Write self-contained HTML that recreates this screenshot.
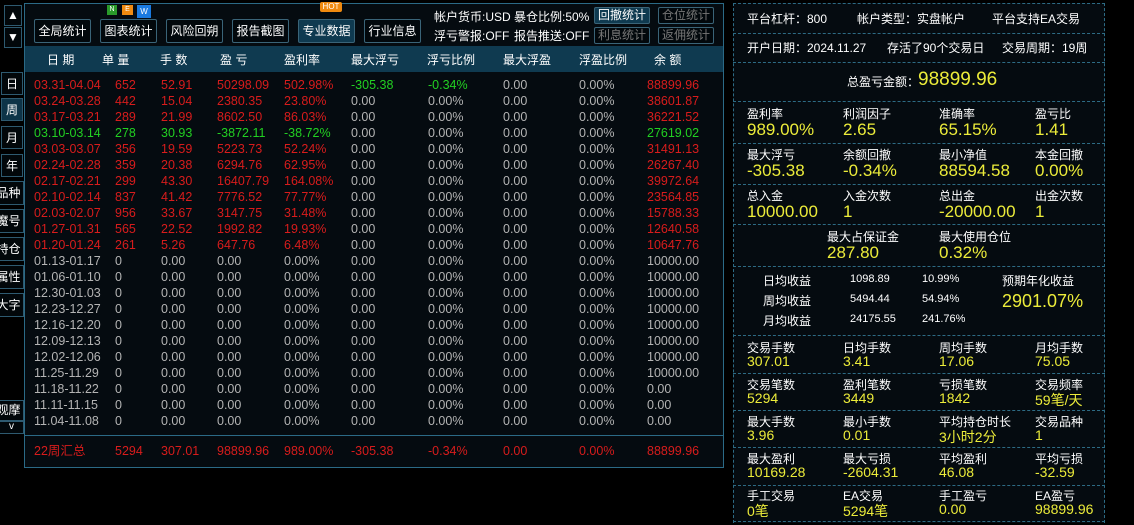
<!DOCTYPE html>
<html><head><meta charset="utf-8"><style>
*{margin:0;padding:0;box-sizing:border-box}
body{width:1134px;height:525px;background:#000;position:relative;overflow:hidden;font-family:"Liberation Sans","Noto Sans CJK SC",sans-serif;font-size:12px;color:#e6e6e6}
.a{position:absolute;white-space:nowrap}
.btn{position:absolute;border:1px solid #3a6478;border-radius:2px;color:#fff;font-size:12px;text-align:center;background:#02080c;white-space:nowrap}
.lb{position:absolute;left:0;width:24px;border:1px solid #2e5a70;border-left:none;text-align:center;color:#fff;font-size:12px;line-height:22px;background:#02070a;white-space:nowrap}
#main{position:absolute;left:24px;top:3px;width:700px;height:465px;border:1px solid #2b6a86;background:#050b10}
#hdr{position:absolute;left:25px;top:46px;width:698px;height:26px;background:#0f3a50}
#hdr span{position:absolute;top:5px;color:#fff;font-size:12px;white-space:nowrap}
.r{position:absolute;left:0;width:724px;height:16px;font-size:12.5px;line-height:16px;color:#b4b4b4}
.r span{position:absolute;top:0;white-space:nowrap}
.c1{left:34px}.c2{left:115px}.c3{left:161px}.c4{left:217px}.c5{left:284px}.c6{left:351px}.c7{left:428px}.c8{left:503px}.c9{left:579px}.c10{left:647px}
.R{color:#d81c1c}.G{color:#22d022}.Y{color:#ecec3a}
#rp{position:absolute;left:733px;top:3px;width:372px;height:520px;background:#050b10;border-left:1px dashed #2d6b84;border-right:1px dashed #2d6b84}
.hl{position:absolute;left:733px;width:372px;border-top:1px dashed #2d6b84}
.lab{position:absolute;font-size:12px;color:#fff;white-space:nowrap}
.val{position:absolute;font-size:17px;color:#ecec3a;white-space:nowrap}
.v2{position:absolute;font-size:14px;color:#ecec3a;white-space:nowrap}
</style></head><body>
<div class="lb" style="top:5px;height:21px;border-left:1px solid #2e5a70;left:4px;width:18px;line-height:19px">▲</div>
<div class="lb" style="top:27px;height:21px;border-left:1px solid #2e5a70;left:4px;width:18px;line-height:19px">▼</div>
<div class="lb" style="top:72px;height:23px;border-left:1px solid #2e5a70;left:1px;width:22px">日</div>
<div class="lb" style="top:98px;height:23px;border-left:1px solid #2e5a70;left:1px;width:22px;background:#0d3448">周</div>
<div class="lb" style="top:126px;height:23px;border-left:1px solid #2e5a70;left:1px;width:22px">月</div>
<div class="lb" style="top:154px;height:23px;border-left:1px solid #2e5a70;left:1px;width:22px">年</div>
<div class="lb" style="top:181px;height:24px;overflow:hidden;text-indent:-6px">品种</div>
<div class="lb" style="top:209px;height:24px;overflow:hidden;text-indent:-6px">魔号</div>
<div class="lb" style="top:237px;height:24px;overflow:hidden;text-indent:-6px">持仓</div>
<div class="lb" style="top:265px;height:24px;overflow:hidden;text-indent:-6px">属性</div>
<div class="lb" style="top:293px;height:24px;overflow:hidden;text-indent:-6px">大字</div>
<div class="lb" style="top:400px;height:21px;overflow:hidden;text-indent:-6px;line-height:19px">观摩</div>
<div class="lb" style="top:421px;height:13px;line-height:10px;font-size:10px">v</div>

<div id="main"></div>
<div class="btn" style="left:34px;top:19px;width:57px;height:24px;line-height:22px">全局统计</div>
<div class="btn" style="left:100px;top:19px;width:57px;height:24px;line-height:22px">图表统计</div>
<div class="a" style="left:107px;top:5px;width:10px;height:10px;background:#2a9a2a;color:#fff;font-size:7px;text-align:center;line-height:10px">N</div>
<div class="a" style="left:122px;top:5px;width:11px;height:10px;background:#f08a10;color:#fff;font-size:7px;text-align:center;line-height:10px">E</div>
<div class="a" style="left:137px;top:5px;width:14px;height:13px;background:#1a7ae0;color:#fff;font-size:8px;text-align:center;line-height:14px">W</div>
<div class="btn" style="left:166px;top:19px;width:57px;height:24px;line-height:22px">风险回朔</div>
<div class="btn" style="left:232px;top:19px;width:57px;height:24px;line-height:22px">报告截图</div>
<div class="btn" style="left:298px;top:19px;width:57px;height:24px;line-height:22px;background:#0f3a50">专业数据</div>
<div class="a" style="left:320px;top:2px;width:22px;height:10px;background:#f08a10;color:#fff;font-size:8px;text-align:center;line-height:10px;border-radius:2px">HOT</div>
<div class="btn" style="left:364px;top:19px;width:57px;height:24px;line-height:22px">行业信息</div>
<div class="a" style="left:434px;top:8px;font-size:12px;color:#fff">帐户货币:USD</div>
<div class="a" style="left:514px;top:8px;font-size:12px;color:#fff">暴仓比例:50%</div>
<div class="a" style="left:434px;top:27px;font-size:12px;color:#fff">浮亏警报:OFF</div>
<div class="a" style="left:514px;top:27px;font-size:12px;color:#fff">报告推送:OFF</div>
<div class="btn" style="left:594px;top:7px;width:56px;height:17px;line-height:15px;background:#0f3a50">回撤统计</div>
<div class="btn" style="left:658px;top:7px;width:56px;height:17px;line-height:15px;color:#777">仓位统计</div>
<div class="btn" style="left:594px;top:27px;width:56px;height:17px;line-height:15px;color:#777">利息统计</div>
<div class="btn" style="left:658px;top:27px;width:56px;height:17px;line-height:15px;color:#777">返佣统计</div>

<div id="hdr"><span style="left:22px">日 期</span><span style="left:77px">单 量</span><span style="left:135px">手 数</span><span style="left:195px">盈 亏</span><span style="left:259px">盈利率</span><span style="left:326px">最大浮亏</span><span style="left:402px">浮亏比例</span><span style="left:478px">最大浮盈</span><span style="left:554px">浮盈比例</span><span style="left:629px">余 额</span></div>

<div class="r R" style="top:77px"><span class="c1">03.31-04.04</span><span class="c2">652</span><span class="c3">52.91</span><span class="c4">50298.09</span><span class="c5">502.98%</span><span class="c6 G">-305.38</span><span class="c7 G">-0.34%</span><span class="c8" style="color:#b4b4b4">0.00</span><span class="c9" style="color:#b4b4b4">0.00%</span><span class="c10">88899.96</span></div>
<div class="r" style="top:93px"><span class="c1 R">03.24-03.28</span><span class="c2 R">442</span><span class="c3 R">15.04</span><span class="c4 R">2380.35</span><span class="c5 R">23.80%</span><span class="c6">0.00</span><span class="c7">0.00%</span><span class="c8">0.00</span><span class="c9">0.00%</span><span class="c10 R">38601.87</span></div>
<div class="r" style="top:109px"><span class="c1 R">03.17-03.21</span><span class="c2 R">289</span><span class="c3 R">21.99</span><span class="c4 R">8602.50</span><span class="c5 R">86.03%</span><span class="c6">0.00</span><span class="c7">0.00%</span><span class="c8">0.00</span><span class="c9">0.00%</span><span class="c10 R">36221.52</span></div>
<div class="r" style="top:125px"><span class="c1 G">03.10-03.14</span><span class="c2 G">278</span><span class="c3 G">30.93</span><span class="c4 G">-3872.11</span><span class="c5 G">-38.72%</span><span class="c6">0.00</span><span class="c7">0.00%</span><span class="c8">0.00</span><span class="c9">0.00%</span><span class="c10 G">27619.02</span></div>
<div class="r" style="top:141px"><span class="c1 R">03.03-03.07</span><span class="c2 R">356</span><span class="c3 R">19.59</span><span class="c4 R">5223.73</span><span class="c5 R">52.24%</span><span class="c6">0.00</span><span class="c7">0.00%</span><span class="c8">0.00</span><span class="c9">0.00%</span><span class="c10 R">31491.13</span></div>
<div class="r" style="top:157px"><span class="c1 R">02.24-02.28</span><span class="c2 R">359</span><span class="c3 R">20.38</span><span class="c4 R">6294.76</span><span class="c5 R">62.95%</span><span class="c6">0.00</span><span class="c7">0.00%</span><span class="c8">0.00</span><span class="c9">0.00%</span><span class="c10 R">26267.40</span></div>
<div class="r" style="top:173px"><span class="c1 R">02.17-02.21</span><span class="c2 R">299</span><span class="c3 R">43.30</span><span class="c4 R">16407.79</span><span class="c5 R">164.08%</span><span class="c6">0.00</span><span class="c7">0.00%</span><span class="c8">0.00</span><span class="c9">0.00%</span><span class="c10 R">39972.64</span></div>
<div class="r" style="top:189px"><span class="c1 R">02.10-02.14</span><span class="c2 R">837</span><span class="c3 R">41.42</span><span class="c4 R">7776.52</span><span class="c5 R">77.77%</span><span class="c6">0.00</span><span class="c7">0.00%</span><span class="c8">0.00</span><span class="c9">0.00%</span><span class="c10 R">23564.85</span></div>
<div class="r" style="top:205px"><span class="c1 R">02.03-02.07</span><span class="c2 R">956</span><span class="c3 R">33.67</span><span class="c4 R">3147.75</span><span class="c5 R">31.48%</span><span class="c6">0.00</span><span class="c7">0.00%</span><span class="c8">0.00</span><span class="c9">0.00%</span><span class="c10 R">15788.33</span></div>
<div class="r" style="top:221px"><span class="c1 R">01.27-01.31</span><span class="c2 R">565</span><span class="c3 R">22.52</span><span class="c4 R">1992.82</span><span class="c5 R">19.93%</span><span class="c6">0.00</span><span class="c7">0.00%</span><span class="c8">0.00</span><span class="c9">0.00%</span><span class="c10 R">12640.58</span></div>
<div class="r" style="top:237px"><span class="c1 R">01.20-01.24</span><span class="c2 R">261</span><span class="c3 R">5.26</span><span class="c4 R">647.76</span><span class="c5 R">6.48%</span><span class="c6">0.00</span><span class="c7">0.00%</span><span class="c8">0.00</span><span class="c9">0.00%</span><span class="c10 R">10647.76</span></div>
<div class="r" style="top:253px"><span class="c1">01.13-01.17</span><span class="c2">0</span><span class="c3">0.00</span><span class="c4">0.00</span><span class="c5">0.00%</span><span class="c6">0.00</span><span class="c7">0.00%</span><span class="c8">0.00</span><span class="c9">0.00%</span><span class="c10">10000.00</span></div>
<div class="r" style="top:269px"><span class="c1">01.06-01.10</span><span class="c2">0</span><span class="c3">0.00</span><span class="c4">0.00</span><span class="c5">0.00%</span><span class="c6">0.00</span><span class="c7">0.00%</span><span class="c8">0.00</span><span class="c9">0.00%</span><span class="c10">10000.00</span></div>
<div class="r" style="top:285px"><span class="c1">12.30-01.03</span><span class="c2">0</span><span class="c3">0.00</span><span class="c4">0.00</span><span class="c5">0.00%</span><span class="c6">0.00</span><span class="c7">0.00%</span><span class="c8">0.00</span><span class="c9">0.00%</span><span class="c10">10000.00</span></div>
<div class="r" style="top:301px"><span class="c1">12.23-12.27</span><span class="c2">0</span><span class="c3">0.00</span><span class="c4">0.00</span><span class="c5">0.00%</span><span class="c6">0.00</span><span class="c7">0.00%</span><span class="c8">0.00</span><span class="c9">0.00%</span><span class="c10">10000.00</span></div>
<div class="r" style="top:317px"><span class="c1">12.16-12.20</span><span class="c2">0</span><span class="c3">0.00</span><span class="c4">0.00</span><span class="c5">0.00%</span><span class="c6">0.00</span><span class="c7">0.00%</span><span class="c8">0.00</span><span class="c9">0.00%</span><span class="c10">10000.00</span></div>
<div class="r" style="top:333px"><span class="c1">12.09-12.13</span><span class="c2">0</span><span class="c3">0.00</span><span class="c4">0.00</span><span class="c5">0.00%</span><span class="c6">0.00</span><span class="c7">0.00%</span><span class="c8">0.00</span><span class="c9">0.00%</span><span class="c10">10000.00</span></div>
<div class="r" style="top:349px"><span class="c1">12.02-12.06</span><span class="c2">0</span><span class="c3">0.00</span><span class="c4">0.00</span><span class="c5">0.00%</span><span class="c6">0.00</span><span class="c7">0.00%</span><span class="c8">0.00</span><span class="c9">0.00%</span><span class="c10">10000.00</span></div>
<div class="r" style="top:365px"><span class="c1">11.25-11.29</span><span class="c2">0</span><span class="c3">0.00</span><span class="c4">0.00</span><span class="c5">0.00%</span><span class="c6">0.00</span><span class="c7">0.00%</span><span class="c8">0.00</span><span class="c9">0.00%</span><span class="c10">10000.00</span></div>
<div class="r" style="top:381px"><span class="c1">11.18-11.22</span><span class="c2">0</span><span class="c3">0.00</span><span class="c4">0.00</span><span class="c5">0.00%</span><span class="c6">0.00</span><span class="c7">0.00%</span><span class="c8">0.00</span><span class="c9">0.00%</span><span class="c10">0.00</span></div>
<div class="r" style="top:397px"><span class="c1">11.11-11.15</span><span class="c2">0</span><span class="c3">0.00</span><span class="c4">0.00</span><span class="c5">0.00%</span><span class="c6">0.00</span><span class="c7">0.00%</span><span class="c8">0.00</span><span class="c9">0.00%</span><span class="c10">0.00</span></div>
<div class="r" style="top:413px"><span class="c1">11.04-11.08</span><span class="c2">0</span><span class="c3">0.00</span><span class="c4">0.00</span><span class="c5">0.00%</span><span class="c6">0.00</span><span class="c7">0.00%</span><span class="c8">0.00</span><span class="c9">0.00%</span><span class="c10">0.00</span></div>
<div class="a" style="left:25px;top:435px;width:698px;border-top:1px solid #2b6a86"></div>
<div class="r R" style="top:443px"><span class="c1">22周汇总</span><span class="c2">5294</span><span class="c3">307.01</span><span class="c4">98899.96</span><span class="c5">989.00%</span><span class="c6">-305.38</span><span class="c7">-0.34%</span><span class="c8">0.00</span><span class="c9">0.00%</span><span class="c10">88899.96</span></div>

<div id="rp"></div>
<div class="hl" style="top:3px"></div><div class="hl" style="top:33px"></div><div class="hl" style="top:62px"></div><div class="hl" style="top:101px"></div><div class="hl" style="top:143px"></div><div class="hl" style="top:184px"></div><div class="hl" style="top:224px"></div><div class="hl" style="top:266px"></div><div class="hl" style="top:335px"></div><div class="hl" style="top:373px"></div><div class="hl" style="top:410px"></div><div class="hl" style="top:447px"></div><div class="hl" style="top:485px"></div><div class="hl" style="top:521px"></div>
<div class="lab" style="left:747px;top:10px">平台杠杆：800</div>
<div class="lab" style="left:857px;top:10px">帐户类型：实盘帐户</div>
<div class="lab" style="left:992px;top:10px">平台支持EA交易</div>
<div class="lab" style="left:747px;top:39px">开户日期：2024.11.27</div>
<div class="lab" style="left:887px;top:39px">存活了90个交易日</div>
<div class="lab" style="left:1002px;top:39px">交易周期：19周</div>
<div class="lab" style="left:847px;top:73px">总盈亏金额：</div>
<div class="val" style="left:918px;top:69px;font-size:19px">98899.96</div>

<div class="lab" style="left:747px;top:105px">盈利率</div><div class="lab" style="left:843px;top:105px">利润因子</div><div class="lab" style="left:939px;top:105px">准确率</div><div class="lab" style="left:1035px;top:105px">盈亏比</div>
<div class="val" style="left:747px;top:120px">989.00%</div><div class="val" style="left:843px;top:120px">2.65</div><div class="val" style="left:939px;top:120px">65.15%</div><div class="val" style="left:1035px;top:120px">1.41</div>
<div class="lab" style="left:747px;top:146px">最大浮亏</div><div class="lab" style="left:843px;top:146px">余额回撤</div><div class="lab" style="left:939px;top:146px">最小净值</div><div class="lab" style="left:1035px;top:146px">本金回撤</div>
<div class="val" style="left:747px;top:161px">-305.38</div><div class="val" style="left:843px;top:161px">-0.34%</div><div class="val" style="left:939px;top:161px">88594.58</div><div class="val" style="left:1035px;top:161px">0.00%</div>
<div class="lab" style="left:747px;top:187px">总入金</div><div class="lab" style="left:843px;top:187px">入金次数</div><div class="lab" style="left:939px;top:187px">总出金</div><div class="lab" style="left:1035px;top:187px">出金次数</div>
<div class="val" style="left:747px;top:202px">10000.00</div><div class="val" style="left:843px;top:202px">1</div><div class="val" style="left:939px;top:202px">-20000.00</div><div class="val" style="left:1035px;top:202px">1</div>
<div class="lab" style="left:827px;top:228px">最大占保证金</div><div class="lab" style="left:939px;top:228px">最大使用仓位</div>
<div class="val" style="left:827px;top:243px">287.80</div><div class="val" style="left:939px;top:243px">0.32%</div>

<div class="lab" style="left:763px;top:272px">日均收益</div><div class="lab" style="left:850px;top:273px;font-size:11px">1098.89</div><div class="lab" style="left:922px;top:273px;font-size:11px">10.99%</div>
<div class="lab" style="left:763px;top:292px">周均收益</div><div class="lab" style="left:850px;top:293px;font-size:11px">5494.44</div><div class="lab" style="left:922px;top:293px;font-size:11px">54.94%</div>
<div class="lab" style="left:763px;top:312px">月均收益</div><div class="lab" style="left:850px;top:313px;font-size:11px">24175.55</div><div class="lab" style="left:922px;top:313px;font-size:11px">241.76%</div>
<div class="lab" style="left:1002px;top:272px">预期年化收益</div>
<div class="val" style="left:1002px;top:291px;font-size:18px">2901.07%</div>

<div class="lab" style="left:747px;top:339px">交易手数</div><div class="lab" style="left:843px;top:339px">日均手数</div><div class="lab" style="left:939px;top:339px">周均手数</div><div class="lab" style="left:1035px;top:339px">月均手数</div>
<div class="v2" style="left:747px;top:353px">307.01</div><div class="v2" style="left:843px;top:353px">3.41</div><div class="v2" style="left:939px;top:353px">17.06</div><div class="v2" style="left:1035px;top:353px">75.05</div>
<div class="lab" style="left:747px;top:376px">交易笔数</div><div class="lab" style="left:843px;top:376px">盈利笔数</div><div class="lab" style="left:939px;top:376px">亏损笔数</div><div class="lab" style="left:1035px;top:376px">交易频率</div>
<div class="v2" style="left:747px;top:390px">5294</div><div class="v2" style="left:843px;top:390px">3449</div><div class="v2" style="left:939px;top:390px">1842</div><div class="v2" style="left:1035px;top:390px">59笔/天</div>
<div class="lab" style="left:747px;top:413px">最大手数</div><div class="lab" style="left:843px;top:413px">最小手数</div><div class="lab" style="left:939px;top:413px">平均持仓时长</div><div class="lab" style="left:1035px;top:413px">交易品种</div>
<div class="v2" style="left:747px;top:427px">3.96</div><div class="v2" style="left:843px;top:427px">0.01</div><div class="v2" style="left:939px;top:427px">3小时2分</div><div class="v2" style="left:1035px;top:427px">1</div>
<div class="lab" style="left:747px;top:450px">最大盈利</div><div class="lab" style="left:843px;top:450px">最大亏损</div><div class="lab" style="left:939px;top:450px">平均盈利</div><div class="lab" style="left:1035px;top:450px">平均亏损</div>
<div class="v2" style="left:747px;top:464px">10169.28</div><div class="v2" style="left:843px;top:464px">-2604.31</div><div class="v2" style="left:939px;top:464px">46.08</div><div class="v2" style="left:1035px;top:464px">-32.59</div>
<div class="lab" style="left:747px;top:487px">手工交易</div><div class="lab" style="left:843px;top:487px">EA交易</div><div class="lab" style="left:939px;top:487px">手工盈亏</div><div class="lab" style="left:1035px;top:487px">EA盈亏</div>
<div class="v2" style="left:747px;top:501px">0笔</div><div class="v2" style="left:843px;top:501px">5294笔</div><div class="v2" style="left:939px;top:501px">0.00</div><div class="v2" style="left:1035px;top:501px">98899.96</div>
</body></html>
